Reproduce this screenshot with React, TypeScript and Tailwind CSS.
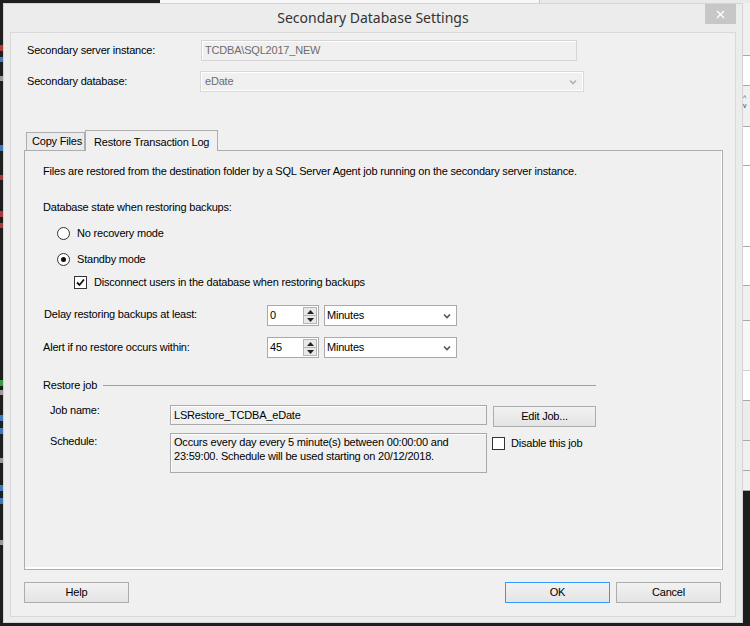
import React from 'react';

const font = "font-['Liberation_Sans',Arial,sans-serif]";

const Chevron = ({ color = '#555' }: { color?: string }) => (
  <svg width="8" height="6" viewBox="0 0 8 6">
    <path d="M1 1.5 L4 4.5 L7 1.5" fill="none" stroke={color} strokeWidth="1.6" />
  </svg>
);

const Radio = ({ checked, label }: { checked?: boolean; label: string }) => (
  <div className="flex items-center h-[13px] gap-[7px]">
    <div className="w-[13px] h-[13px] rounded-full border border-[#333] bg-white flex items-center justify-center">
      {checked && <div className="w-[5px] h-[5px] rounded-full bg-[#111]" />}
    </div>
    <span className="leading-[13px]">{label}</span>
  </div>
);

const Check = ({ checked }: { checked?: boolean }) => (
  <div className="w-[13px] h-[13px] border border-[#333] bg-white flex items-center justify-center shrink-0">
    {checked && (
      <svg width="9" height="9" viewBox="0 0 9 9">
        <path d="M1 4.5 L3.5 7 L8 1.5" fill="none" stroke="#111" strokeWidth="1.8" />
      </svg>
    )}
  </div>
);

const Btn = ({ children, w, focus }: { children: React.ReactNode; w: string; focus?: boolean }) => (
  <div
    className={`${w} h-[21px] flex items-center justify-center border bg-gradient-to-b from-[#f2f2f2] to-[#e4e4e4] ${
      focus ? 'border-[#3399ff]' : 'border-[#adadad]'
    }`}
  >
    {children}
  </div>
);

const Spin = ({ value }: { value: string }) => (
  <div className="w-[52px] h-[21px] border border-[#a9a9a9] bg-white flex">
    <span className="flex-1 pl-[2px] leading-[19px]">{value}</span>
    <div className="w-[14px] flex flex-col mr-[1px] my-[1px]">
      <div className="flex-1 border border-[#b5b5b5] bg-[#e8e8e8] flex items-center justify-center">
        <svg width="7" height="4" viewBox="0 0 7 4"><path d="M0 4 L3.5 0 L7 4 Z" fill="#222" /></svg>
      </div>
      <div className="flex-1 border border-t-0 border-[#b5b5b5] bg-[#e8e8e8] flex items-center justify-center">
        <svg width="7" height="4" viewBox="0 0 7 4"><path d="M0 0 L3.5 4 L7 0 Z" fill="#222" /></svg>
      </div>
    </div>
  </div>
);

const Minutes = () => (
  <div className="w-[133px] h-[21px] border border-[#a9a9a9] bg-white flex items-center pl-[2px] pr-[5px]">
    <span className="flex-1">Minutes</span>
    <Chevron />
  </div>
);

export default function App() {
  return (
    <div className={`w-[750px] h-[626px] bg-[#1e1e1e] flex flex-col overflow-hidden text-[11px] tracking-[-0.2px] text-black ${font}`}>
      {/* backdrop top edge */}
      <div className="h-[3px] flex shrink-0">
        <div className="w-[160px] bg-[#1e1e1e]" />
        <div className="w-[380px] bg-[#f7f7f7] border-r border-[#c8c8c8]" />
        <div className="flex-1 bg-[#e9e9e9]" />
      </div>

      <div className="flex h-[620px] shrink-0">
        {/* editor behind, left */}
        <div className="w-[3px] flex flex-col">
          <div className="h-[42px]" />
          <div className="h-[6px] bg-[#a83a3a]" />
          <div className="h-[6px]" />
          <div className="h-[5px] bg-[#3f78b8]" />
          <div className="h-[14px]" />
          <div className="h-[5px] bg-[#9a9a9a]" />
          <div className="h-[64px]" />
          <div className="h-[6px] bg-[#3f78b8]" />
          <div className="h-[24px]" />
          <div className="h-[5px] bg-[#a83a3a]" />
          <div className="h-[31px]" />
          <div className="h-[6px] bg-[#a83a3a]" />
          <div className="h-[6px]" />
          <div className="h-[5px] bg-[#a83a3a]" />
          <div className="h-[152px]" />
          <div className="h-[6px] bg-[#3e9a3e]" />
          <div className="h-[4px]" />
          <div className="h-[5px] bg-[#9a9a9a]" />
          <div className="h-[20px]" />
          <div className="h-[6px] bg-[#3f78b8]" />
          <div className="h-[7px]" />
          <div className="h-[6px] bg-[#3f78b8]" />
          <div className="h-[24px]" />
          <div className="h-[5px] bg-[#9a9a9a]" />
          <div className="h-[22px]" />
          <div className="h-[6px] bg-[#3f78b8]" />
          <div className="h-[7px]" />
          <div className="h-[6px] bg-[#3f78b8]" />
          <div className="h-[36px]" />
          <div className="h-[5px] bg-[#9a9a9a]" />
        </div>

        {/* dialog */}
        <div className="w-[740px] h-[620px] bg-[#ececec] border border-[#d4d4d4] flex flex-col">
          <div className="h-[28px] relative flex items-center justify-center shrink-0">
            <span className="font-['Noto_Sans',sans-serif] text-[14px] tracking-normal text-[#333] -mt-[2px]">
              Secondary Database Settings
            </span>
            <div className="absolute right-[6px] top-0 w-[31px] h-[20px] bg-[#c7c7c7] flex items-center justify-center">
              <svg width="9" height="9" viewBox="0 0 9 9">
                <path d="M1 1 L8 8 M8 1 L1 8" stroke="#fff" strokeWidth="1.4" />
              </svg>
            </div>
          </div>

          <div className="mx-[6px] flex-1 mb-[5px] border border-[#d9d9d9] bg-[#f0f0f0] flex flex-col">
            {/* top fields */}
            <div className="flex items-center h-[21px] mt-[7px]">
              <span className="w-[190px] pl-[16px] shrink-0">Secondary server instance:</span>
              <div className="w-[376px] h-[21px] border border-[#d5d5d5] shadow-[inset_1px_1px_0_#fff] bg-[#f0f0f0] flex items-center pl-[3px] text-[#6d6d6d]">
                TCDBA\SQL2017_NEW
              </div>
            </div>
            <div className="flex items-center h-[21px] mt-[10px]">
              <span className="w-[189px] pl-[16px] shrink-0">Secondary database:</span>
              <div className="w-[384px] h-[21px] border border-[#d9d9d9] bg-[#f0f0f0] shadow-[inset_1px_1px_0_#fff,inset_-1px_-1px_0_#fff] flex items-center pl-[4px] pr-[6px] text-[#6d6d6d]">
                <span className="flex-1">eDate</span>
                <Chevron color="#b0b0b0" />
              </div>
            </div>

            {/* tabs */}
            <div className="mt-[38px] ml-[15px] flex items-end h-[20px] relative z-10">
              <div className="w-[59px] h-[18px] border border-b-0 border-[#adadad] bg-[#ebebeb] flex items-center pl-[5px] whitespace-nowrap">
                Copy Files
              </div>
              <div className="w-[133px] h-[21px] -mb-[1px] border border-b-0 border-[#adadad] bg-[#f0f0f0] flex items-start pt-[3px] pl-[8px] whitespace-nowrap">
                Restore Transaction Log
              </div>
            </div>
            <div className="ml-[13px] w-[699px] h-[420px] border border-[#adadad] bg-[#f0f0f0] shadow-[inset_-1px_-2px_0_#fff] flex flex-col pl-[18px]">
              <div className="mt-[14px] h-[13px] leading-[13px]">
                Files are restored from the destination folder by a SQL Server Agent job running on the secondary server instance.
              </div>
              <div className="mt-[23px] h-[13px] leading-[13px]">Database state when restoring backups:</div>
              <div className="mt-[13px] ml-[14px]">
                <Radio label="No recovery mode" />
              </div>
              <div className="mt-[13px] ml-[14px]">
                <Radio checked label="Standby mode" />
              </div>
              <div className="mt-[10px] ml-[31px] flex items-center gap-[7px] h-[13px]">
                <Check checked />
                <span className="leading-[13px]">Disconnect users in the database when restoring backups</span>
              </div>

              <div className="mt-[16px] flex items-center h-[21px]">
                <span className="w-[224px] pl-[1px] shrink-0 -mt-[3px]">Delay restoring backups at least:</span>
                <Spin value="0" />
                <div className="w-[5px]" />
                <Minutes />
              </div>
              <div className="mt-[11px] flex items-center h-[21px]">
                <span className="w-[224px] shrink-0 -mt-[1px]">Alert if no restore occurs within:</span>
                <Spin value="45" />
                <div className="w-[5px]" />
                <Minutes />
              </div>

              <div className="mt-[21px] w-[553px] flex items-center h-[13px]">
                <span className="leading-[13px]">Restore job</span>
                <div className="flex-1 ml-[6px] border-t border-[#a0a0a0]" />
              </div>

              <div className="mt-[11px] flex items-start">
                <span className="w-[127px] pl-[7px] shrink-0 leading-[13px] mt-[1px]">Job name:</span>
                <div className="mt-[2px] w-[317px] h-[20px] border border-[#a9a9a9] shadow-[inset_1px_1px_0_#fff] bg-[#f0f0f0] flex items-center pl-[3px]">
                  LSRestore_TCDBA_eDate
                </div>
                <div className="ml-[6px] mt-[3px]">
                  <Btn w="w-[103px]">Edit Job...</Btn>
                </div>
              </div>
              <div className="mt-[6px] flex items-start">
                <span className="w-[127px] pl-[7px] shrink-0 leading-[13px] mt-[2px]">Schedule:</span>
                <div className="w-[317px] h-[40px] border border-[#a9a9a9] shadow-[inset_1px_1px_0_#fff] bg-[#f0f0f0] pl-[3px] pt-[1px] leading-[14px]">
                  Occurs every day every 5 minute(s) between 00:00:00 and
                  <br />
                  23:59:00. Schedule will be used starting on 20/12/2018.
                </div>
                <div className="ml-[5px] mt-[3px] flex items-center gap-[6px] h-[14px]">
                  <Check />
                  <span>Disable this job</span>
                </div>
              </div>
            </div>

            {/* bottom buttons */}
            <div className="mt-[12px] mx-[13px] flex justify-between">
              <Btn w="w-[105px]">Help</Btn>
              <div className="flex gap-[6px] mr-[1px]">
                <Btn w="w-[105px]" focus>OK</Btn>
                <Btn w="w-[105px]">Cancel</Btn>
              </div>
            </div>
          </div>
        </div>

        {/* app behind, right */}
        <div className="w-[7px] flex flex-col">
          <div className="h-[52px] bg-[#f0f0f0]" />
          <div className="h-[31px] bg-white border-y border-[#a8a8a8]" />
          <div className="h-[40px] bg-[#f0f0f0] text-[7px] leading-[8px] text-[#444] flex flex-col pt-[8px]">
            <span>^</span>
            <span>v</span>
          </div>
          <div className="h-[40px] bg-white border-y border-[#a8a8a8]" />
          <div className="h-[80px] bg-white" />
          <div className="h-[40px] bg-white border-y border-[#a8a8a8]" />
          <div className="h-[35px] bg-[#f0f0f0] border-b border-[#a8a8a8]" />
          <div className="h-[50px] bg-[#f7f7f7] border-b border-[#cfcfcf]" />
          <div className="h-[30px] bg-white border-b border-[#a8a8a8]" />
          <div className="h-[40px] bg-[#ececec] border-b border-[#a8a8a8]" />
          <div className="h-[30px] bg-[#f0f0f0] border-b border-[#a8a8a8]" />
          <div className="h-[20px] bg-[#f0f0f0] border-b border-[#a8a8a8]" />
          <div className="flex-1 bg-[#1e1e1e]" />
        </div>
      </div>
      <div className="flex-1 bg-[#1e1e1e]" />
    </div>
  );
}
